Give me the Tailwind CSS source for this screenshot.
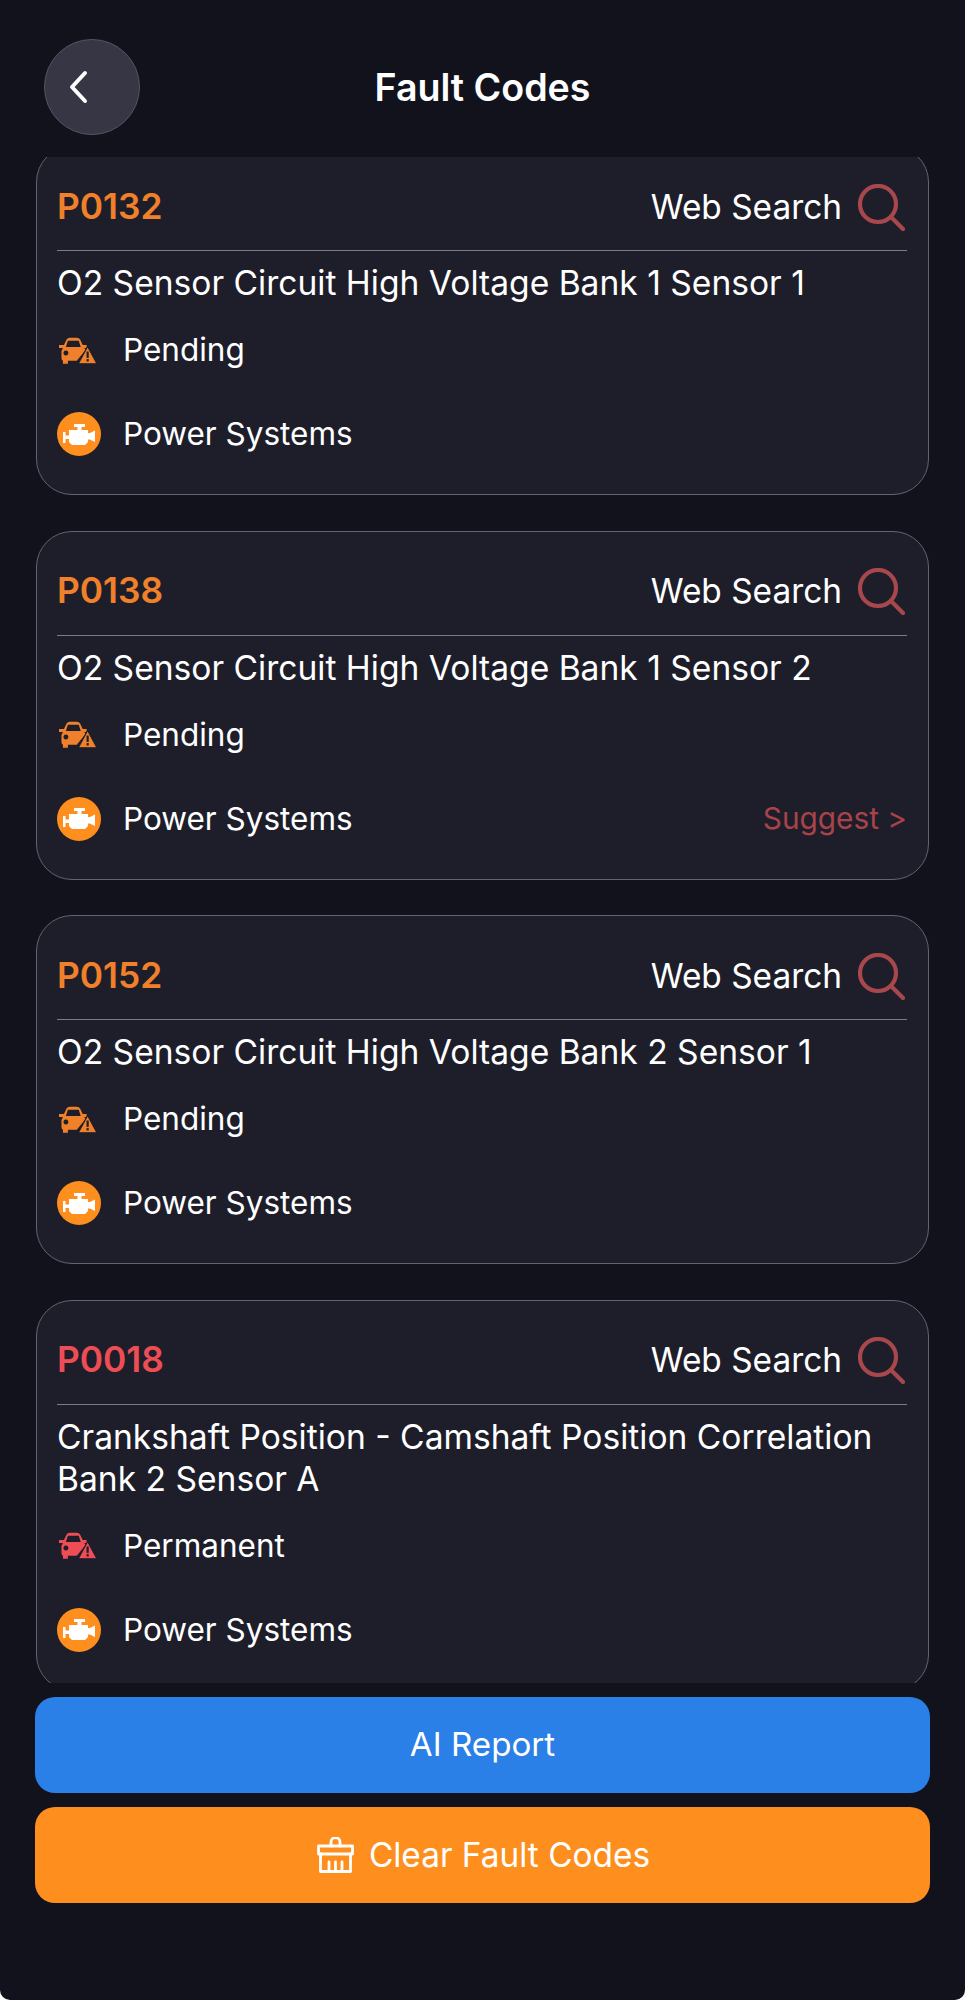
<!DOCTYPE html>
<html lang="en">
<head>
<meta charset="utf-8" />
<meta name="viewport" content="width=device-width, initial-scale=1.0" />
<title>Fault Codes</title>
<script src="https://cdn.jsdelivr.net/npm/@tailwindcss/browser@4"></script>
</head>
<body class="bg-white font-['Inter',sans-serif] text-white">
<div class="w-[965px] h-[2000px] flex flex-col overflow-hidden bg-[#11121c] rounded-b-[10px]">

  <!-- header -->
  <header class="relative h-[157px] shrink-0 flex items-center justify-center pt-[19px]">
    <button class="absolute left-[44px] top-[39px] w-[96px] h-[96px] rounded-full bg-[#363644] border border-[#55555f] flex items-center pl-[24px]">
      <svg class="w-[20px] h-[34px]" viewBox="0 0 20 34" fill="none" stroke="#fff" stroke-width="4" stroke-linecap="round" stroke-linejoin="round"><path d="M16 3 L3 17 L16 31"/></svg>
    </button>
    <h1 class="text-[37.6px] font-semibold leading-none">Fault Codes</h1>
  </header>

  <!-- list -->
  <main class="h-[1526px] shrink-0 overflow-hidden px-[36px]">
    <div class="-mt-[11px] flex flex-col gap-[35.5px]">

      <section class="h-[349px] rounded-[36px] border border-[#63646d] bg-[#1d1e2a] pl-[20px] pr-[21px] pt-[37px]">
        <div class="flex items-center justify-between h-[67px] border-b border-[#7b7c83] pb-[20px]">
          <span class="text-[35.3px] font-semibold text-[#f0812a]">P0132</span>
          <span class="flex items-center gap-[16px] text-[33.4px]">Web Search
            <svg class="w-[47px] h-[47px] mr-[2px]" viewBox="0 0 47 47" fill="none" stroke="#a8474c" stroke-width="4.2" stroke-linecap="round"><circle cx="20" cy="20" r="18"/><path d="M33 33 L45 45"/></svg>
          </span>
        </div>
        <p class="text-[33.6px] leading-[42px] mt-[11px]">O2 Sensor Circuit High Voltage Bank 1 Sensor 1</p>
        <div class="flex items-center mt-[25px] h-[42px]">
          <svg class="w-[38px] h-[27px] ml-[2px] mr-[26px]" viewBox="0 0 38.5 27" fill="#f0812a"><path fill-rule="evenodd" d="M5 8 L7.5 2.5 Q8.5 .5 11 .5 H18 Q20.5 .5 21.5 2.5 L24 8 H28 V11 H25.5 L27 13 L18 24 H9 V27 H4 V24 Q2.5 23 2.5 21 V14 L4 11 H0 V8 Z M7 10 L9 3.5 H20 L22 10 Z M7 13.5 a2.5 2.5 0 1 0 .01 0 Z"/><path d="M29 9.5 L38.5 27 H19.5 Z" stroke="#1d1e2a" stroke-width="1.2" stroke-linejoin="round"/><rect x="27.9" y="14.5" width="2.2" height="6.5" fill="#1d1e2a"/><rect x="27.9" y="22.2" width="2.2" height="2.4" fill="#1d1e2a"/></svg>
          <span class="text-[31.5px]">Pending</span>
        </div>
        <div class="flex items-center mt-[41px] h-[44px]">
          <span class="w-[44px] h-[44px] rounded-full bg-[#fe8f1f] mr-[22px] flex items-center justify-center">
            <svg class="w-[32px] h-[21px]" viewBox="0 0 32 21" fill="#fff"><path d="M11 0 H22 V3 H18.5 V6 H25 V9 H27 L32 6.5 V18 L27 15.5 H25 V18 L22 21 H9 L6 18 V15 H2.5 V19 H0 V8 H2.5 V11.5 H6 V6 H14.5 V3 H11 Z"/></svg>
          </span>
          <span class="text-[31.5px]">Power Systems</span>
        </div>
      </section>

      <section class="h-[349px] rounded-[36px] border border-[#63646d] bg-[#1d1e2a] pl-[20px] pr-[21px] pt-[37px]">
        <div class="flex items-center justify-between h-[67px] border-b border-[#7b7c83] pb-[20px]">
          <span class="text-[35.3px] font-semibold text-[#f0812a]">P0138</span>
          <span class="flex items-center gap-[16px] text-[33.4px]">Web Search
            <svg class="w-[47px] h-[47px] mr-[2px]" viewBox="0 0 47 47" fill="none" stroke="#a8474c" stroke-width="4.2" stroke-linecap="round"><circle cx="20" cy="20" r="18"/><path d="M33 33 L45 45"/></svg>
          </span>
        </div>
        <p class="text-[33.6px] leading-[42px] mt-[11px]">O2 Sensor Circuit High Voltage Bank 1 Sensor 2</p>
        <div class="flex items-center mt-[25px] h-[42px]">
          <svg class="w-[38px] h-[27px] ml-[2px] mr-[26px]" viewBox="0 0 38.5 27" fill="#f0812a"><path fill-rule="evenodd" d="M5 8 L7.5 2.5 Q8.5 .5 11 .5 H18 Q20.5 .5 21.5 2.5 L24 8 H28 V11 H25.5 L27 13 L18 24 H9 V27 H4 V24 Q2.5 23 2.5 21 V14 L4 11 H0 V8 Z M7 10 L9 3.5 H20 L22 10 Z M7 13.5 a2.5 2.5 0 1 0 .01 0 Z"/><path d="M29 9.5 L38.5 27 H19.5 Z" stroke="#1d1e2a" stroke-width="1.2" stroke-linejoin="round"/><rect x="27.9" y="14.5" width="2.2" height="6.5" fill="#1d1e2a"/><rect x="27.9" y="22.2" width="2.2" height="2.4" fill="#1d1e2a"/></svg>
          <span class="text-[31.5px]">Pending</span>
        </div>
        <div class="flex items-center mt-[41px] h-[44px]">
          <span class="w-[44px] h-[44px] rounded-full bg-[#fe8f1f] mr-[22px] flex items-center justify-center">
            <svg class="w-[32px] h-[21px]" viewBox="0 0 32 21" fill="#fff"><path d="M11 0 H22 V3 H18.5 V6 H25 V9 H27 L32 6.5 V18 L27 15.5 H25 V18 L22 21 H9 L6 18 V15 H2.5 V19 H0 V8 H2.5 V11.5 H6 V6 H14.5 V3 H11 Z"/></svg>
          </span>
          <span class="text-[31.5px]">Power Systems</span>
          <span class="ml-auto text-[29.8px] text-[#a8434a]">Suggest &gt;</span>
        </div>
      </section>

      <section class="h-[349px] rounded-[36px] border border-[#63646d] bg-[#1d1e2a] pl-[20px] pr-[21px] pt-[37px]">
        <div class="flex items-center justify-between h-[67px] border-b border-[#7b7c83] pb-[20px]">
          <span class="text-[35.3px] font-semibold text-[#f0812a]">P0152</span>
          <span class="flex items-center gap-[16px] text-[33.4px]">Web Search
            <svg class="w-[47px] h-[47px] mr-[2px]" viewBox="0 0 47 47" fill="none" stroke="#a8474c" stroke-width="4.2" stroke-linecap="round"><circle cx="20" cy="20" r="18"/><path d="M33 33 L45 45"/></svg>
          </span>
        </div>
        <p class="text-[33.6px] leading-[42px] mt-[11px]">O2 Sensor Circuit High Voltage Bank 2 Sensor 1</p>
        <div class="flex items-center mt-[25px] h-[42px]">
          <svg class="w-[38px] h-[27px] ml-[2px] mr-[26px]" viewBox="0 0 38.5 27" fill="#f0812a"><path fill-rule="evenodd" d="M5 8 L7.5 2.5 Q8.5 .5 11 .5 H18 Q20.5 .5 21.5 2.5 L24 8 H28 V11 H25.5 L27 13 L18 24 H9 V27 H4 V24 Q2.5 23 2.5 21 V14 L4 11 H0 V8 Z M7 10 L9 3.5 H20 L22 10 Z M7 13.5 a2.5 2.5 0 1 0 .01 0 Z"/><path d="M29 9.5 L38.5 27 H19.5 Z" stroke="#1d1e2a" stroke-width="1.2" stroke-linejoin="round"/><rect x="27.9" y="14.5" width="2.2" height="6.5" fill="#1d1e2a"/><rect x="27.9" y="22.2" width="2.2" height="2.4" fill="#1d1e2a"/></svg>
          <span class="text-[31.5px]">Pending</span>
        </div>
        <div class="flex items-center mt-[41px] h-[44px]">
          <span class="w-[44px] h-[44px] rounded-full bg-[#fe8f1f] mr-[22px] flex items-center justify-center">
            <svg class="w-[32px] h-[21px]" viewBox="0 0 32 21" fill="#fff"><path d="M11 0 H22 V3 H18.5 V6 H25 V9 H27 L32 6.5 V18 L27 15.5 H25 V18 L22 21 H9 L6 18 V15 H2.5 V19 H0 V8 H2.5 V11.5 H6 V6 H14.5 V3 H11 Z"/></svg>
          </span>
          <span class="text-[31.5px]">Power Systems</span>
        </div>
      </section>

      <section class="h-[391px] rounded-[36px] border border-[#63646d] bg-[#1d1e2a] pl-[20px] pr-[21px] pt-[37px]">
        <div class="flex items-center justify-between h-[67px] border-b border-[#7b7c83] pb-[20px]">
          <span class="text-[35.3px] font-semibold text-[#ee4d55]">P0018</span>
          <span class="flex items-center gap-[16px] text-[33.4px]">Web Search
            <svg class="w-[47px] h-[47px] mr-[2px]" viewBox="0 0 47 47" fill="none" stroke="#a8474c" stroke-width="4.2" stroke-linecap="round"><circle cx="20" cy="20" r="18"/><path d="M33 33 L45 45"/></svg>
          </span>
        </div>
        <p class="text-[33.6px] leading-[42px] mt-[11px]">Crankshaft Position - Camshaft Position Correlation Bank 2 Sensor A</p>
        <div class="flex items-center mt-[25px] h-[42px]">
          <svg class="w-[38px] h-[27px] ml-[2px] mr-[26px]" viewBox="0 0 38.5 27" fill="#ee4d55"><path fill-rule="evenodd" d="M5 8 L7.5 2.5 Q8.5 .5 11 .5 H18 Q20.5 .5 21.5 2.5 L24 8 H28 V11 H25.5 L27 13 L18 24 H9 V27 H4 V24 Q2.5 23 2.5 21 V14 L4 11 H0 V8 Z M7 10 L9 3.5 H20 L22 10 Z M7 13.5 a2.5 2.5 0 1 0 .01 0 Z"/><path d="M29 9.5 L38.5 27 H19.5 Z" stroke="#1d1e2a" stroke-width="1.2" stroke-linejoin="round"/><rect x="27.9" y="14.5" width="2.2" height="6.5" fill="#1d1e2a"/><rect x="27.9" y="22.2" width="2.2" height="2.4" fill="#1d1e2a"/></svg>
          <span class="text-[31.5px]">Permanent</span>
        </div>
        <div class="flex items-center mt-[41px] h-[44px]">
          <span class="w-[44px] h-[44px] rounded-full bg-[#fe8f1f] mr-[22px] flex items-center justify-center">
            <svg class="w-[32px] h-[21px]" viewBox="0 0 32 21" fill="#fff"><path d="M11 0 H22 V3 H18.5 V6 H25 V9 H27 L32 6.5 V18 L27 15.5 H25 V18 L22 21 H9 L6 18 V15 H2.5 V19 H0 V8 H2.5 V11.5 H6 V6 H14.5 V3 H11 Z"/></svg>
          </span>
          <span class="text-[31.5px]">Power Systems</span>
        </div>
      </section>

    </div>
  </main>

  <!-- actions -->
  <div class="px-[35px] pt-[14px] flex flex-col gap-[14px]">
    <button class="h-[96px] rounded-[20px] bg-[#2a80e6] text-[33.2px] flex items-center justify-center">AI Report</button>
    <button class="h-[96px] rounded-[20px] bg-[#fe8f1f] text-[33.4px] flex items-center justify-center gap-[15px] pl-[2px]">
      <svg class="w-[37px] h-[36px]" viewBox="0 0 37 36" fill="none" stroke="#fff" stroke-width="2.8" stroke-linejoin="round" stroke-linecap="round"><path d="M14 9 V5 a4.5 4.5 0 0 1 9 0 V9"/><path d="M1.5 9 H35.5 V17 H1.5 Z"/><path d="M3.5 17 V34.5 H33.5 V17"/><path d="M12 34.5 V25 M18.5 34.5 V25 M25 34.5 V25"/></svg>
      Clear Fault Codes
    </button>
  </div>
</div>
</body>
</html>
